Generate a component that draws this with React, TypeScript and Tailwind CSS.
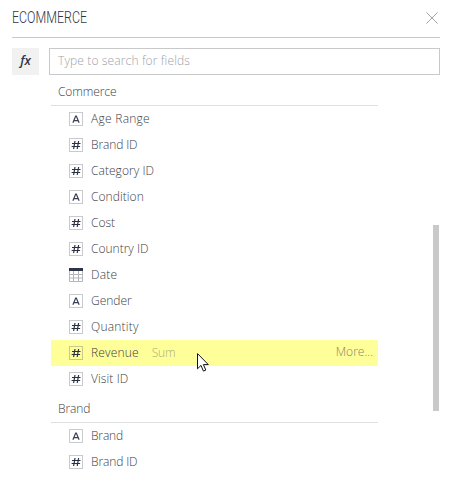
import React from "react";

type Kind = "text" | "number" | "date";
interface Field {
  name: string;
  kind: Kind;
  spacing: string;
  active?: boolean;
}

const commerce: Field[] = [
  { name: "Age Range", kind: "text", spacing: "tracking-[0.27px]" },
  { name: "Brand ID", kind: "number", spacing: "tracking-[-0.12px]" },
  { name: "Category ID", kind: "number", spacing: "tracking-[0.05px]" },
  { name: "Condition", kind: "text", spacing: "tracking-[0.06px]" },
  { name: "Cost", kind: "number", spacing: "tracking-[0px]" },
  { name: "Country ID", kind: "number", spacing: "tracking-[0px]" },
  { name: "Date", kind: "date", spacing: "tracking-[0.2px]" },
  { name: "Gender", kind: "text", spacing: "tracking-[0px]" },
  { name: "Quantity", kind: "number", spacing: "tracking-[0.22px]" },
  { name: "Revenue", kind: "number", spacing: "tracking-[0.17px]", active: true },
  { name: "Visit ID", kind: "number", spacing: "tracking-[0.1px]" },
];

const brand: Field[] = [
  { name: "Brand", kind: "text", spacing: "tracking-[-0.15px]" },
  { name: "Brand ID", kind: "number", spacing: "tracking-[-0.12px]" },
];

function FieldIcon({ kind, active }: { kind: Kind; active?: boolean }) {
  const frame = active ? "#c9c98c" : "#c9cacd";
  return (
    <svg width="14" height="14" viewBox="0 0 14 14" fill="none" className="shrink-0">
      {kind === "date" ? (
        <>
          <path d="M.5 3v10.5h13V3M.5 6.5h13M.5 10h13M4.5 3v10.5M9.5 3v10.5" stroke="#b4b6bb" />
          <path d="M0 0h14v3H0z" fill="#2f3447" />
        </>
      ) : (
        <rect x=".5" y=".5" width="13" height="13" stroke={frame} />
      )}
      {kind === "text" && (
        <path d="M3.9 10.8 6.7 4h.6l2.8 6.8M4.8 8.6h4.4" stroke="#3a4055" strokeWidth="1.2" />
      )}
      {kind === "number" && (
        <path d="M6 3 4.6 11M9.6 3 8.2 11M3 5.5h8.5M2.6 8.5h8.5" stroke="#2b3044" strokeWidth="1.2" />
      )}
    </svg>
  );
}

function FieldRow({ field }: { field: Field }) {
  return (
    <div className={`flex h-[26px] items-center pl-[18px] pr-[5px] ${field.active ? "bg-[#ffff99]" : ""}`}>
      <FieldIcon kind={field.kind} active={field.active} />
      <span className={`ml-2 whitespace-nowrap ${field.spacing}`}>{field.name}</span>
      {field.active && (
        <>
          <span className="ml-[13px] tracking-[-0.25px] text-[#acac76]">Sum</span>
          <span className="ml-auto pb-[2px] text-[#85856a]">More...</span>
        </>
      )}
    </div>
  );
}

function Group({ title, fields }: { title: string; fields: Field[] }) {
  return (
    <section>
      <h2 className="flex h-[31px] items-center border-b border-[#dedfe0] pl-[7px] pt-1 font-light tracking-[-0.1px]">
        {title}
      </h2>
      {fields.map((f) => (
        <FieldRow key={f.name} field={f} />
      ))}
    </section>
  );
}

export default function App() {
  return (
    <main className="relative h-[493px] w-[452px] overflow-hidden bg-white px-3 font-['Open_Sans','Noto_Sans',sans-serif] text-[12px] font-light leading-[18px] text-[#3c3e44]">
      <header className="flex h-[38px] items-center justify-between border-b border-[#c8c9ca]">
        <h1 className="origin-left scale-x-[0.775] pb-px font-[Roboto,sans-serif] text-[16px] font-light text-[#2f3447]">
          ECOMMERCE
        </h1>
        <svg width="12" height="12" viewBox="0 0 12 12" className="mb-px mr-[2px]" stroke="#94979d" strokeWidth=".9">
          <path d="M.5.5l11 11M11.5.5l-11 11" />
        </svg>
      </header>
      <div className="mt-[10px] flex h-[27px] gap-[10px]">
        <button className="w-[27px] bg-[#f1f1f2] pb-[2px] text-[12.5px] font-semibold italic text-[#2f3447]">fx</button>
        <div className="flex flex-1 items-center border border-[#c8c9ca] pb-px pl-2 tracking-[0.13px] text-[#a0a2a5]">
          Type to search for fields
        </div>
      </div>
      <div className="flex pl-[39px]">
        <div className="w-[327px]">
          <Group title="Commerce" fields={commerce} />
          <Group title="Brand" fields={brand} />
        </div>
        <div className="ml-[55px] mt-[150px] h-[186px] w-[6px] bg-[#c9c9c9]" />
      </div>
      <svg className="absolute left-[197px] top-[353px]" width="12" height="19" viewBox="0 0 12 19">
        <path d="M.5.6v15.2l3.5-3.4 2.4 5.7 2.4-1-2.4-5.5h4.9z" fill="#fff" stroke="#111" strokeWidth="1" />
      </svg>
    </main>
  );
}
